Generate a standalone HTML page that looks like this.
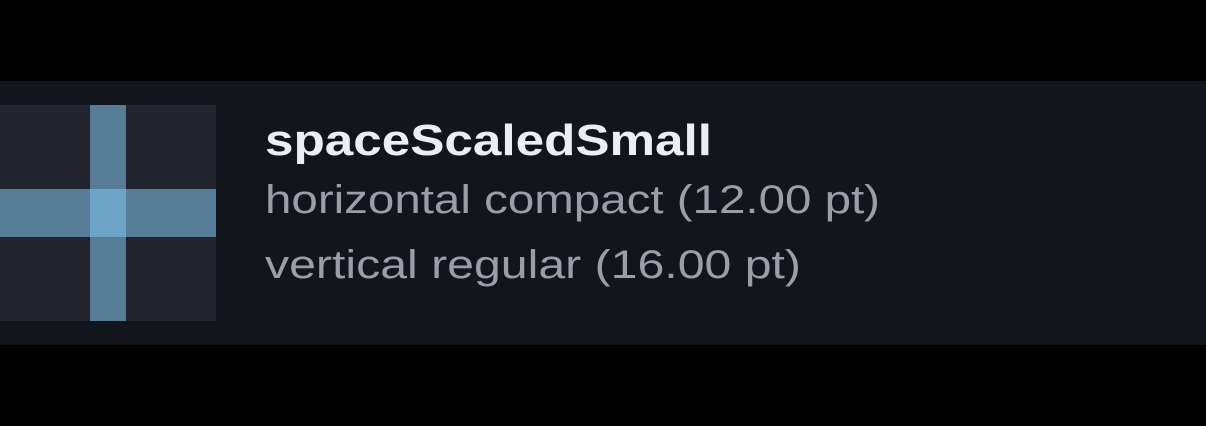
<!DOCTYPE html>
<html><head><style>
html,body{margin:0;padding:0;background:#000;width:1206px;height:426px;overflow:hidden}
</style></head><body>
<svg width="1206" height="426" xmlns="http://www.w3.org/2000/svg" style="display:block">
<rect x="0" y="0" width="1206" height="426" fill="#000"/>
<rect x="0" y="81" width="1206" height="264" fill="#12151c"/>
<rect x="0" y="105" width="216" height="216" fill="#22252d"/>
<rect x="90" y="105" width="36" height="216" fill="#577c97"/>
<rect x="0" y="189" width="216" height="48" fill="#577c97"/>
<rect x="90" y="189" width="36" height="48" fill="#6ca5c8"/>
<text x="265" y="155" font-family="Liberation Sans, sans-serif" font-weight="bold" font-size="44" fill="#eceef2" textLength="447" lengthAdjust="spacingAndGlyphs">spaceScaledSmall</text>
<text x="265" y="213" font-family="Liberation Sans, sans-serif" font-size="40" fill="#9a9ea7" textLength="615" lengthAdjust="spacingAndGlyphs">horizontal compact (12.00 pt)</text>
<text x="265" y="278" font-family="Liberation Sans, sans-serif" font-size="40" fill="#9a9ea7" textLength="536" lengthAdjust="spacingAndGlyphs">vertical regular (16.00 pt)</text>
</svg>
</body></html>
